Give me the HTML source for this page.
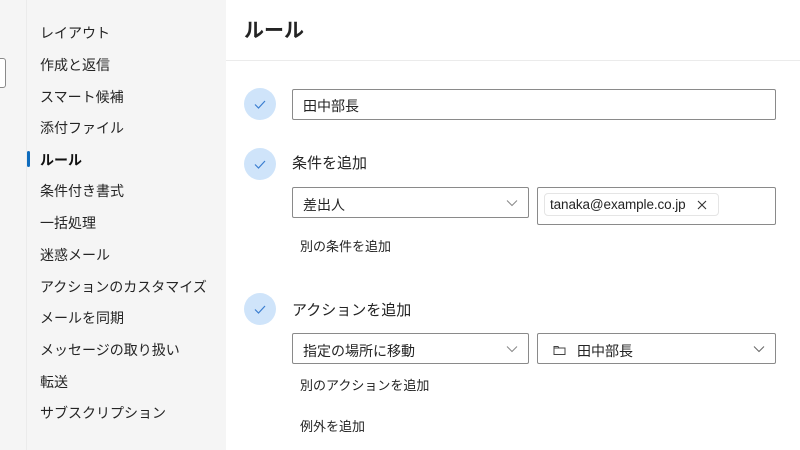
<!DOCTYPE html>
<html><head><meta charset="utf-8"><style>
*{margin:0;padding:0;box-sizing:border-box}
body{width:800px;height:450px;overflow:hidden;background:#fff;font-family:"Liberation Sans","Noto Sans CJK JP",sans-serif;color:#242424;position:relative}
.abs{position:absolute}
.side{left:0;top:0;width:226px;height:450px;background:#f5f5f5}
.strip{left:0;top:0;width:27px;height:450px;background:#f5f5f5;border-right:1px solid #ebebeb}
.stub{left:-4px;top:58px;width:10px;height:30px;border:1px solid #8a8a8a;border-radius:3px;background:#fff}
.nav{left:40px;font-size:14px;line-height:20px;color:#242424}
.circ{width:32px;height:32px;border-radius:50%;background:#cfe4fa}
.circ svg{position:absolute;left:9px;top:10px}
.box{border:1px solid #8a8a8a;border-radius:2px;background:#fff;font-size:14px}
.chev{position:absolute;right:10px;top:11px}
.t{font-size:14px;color:#242424;line-height:20px}
</style></head><body>
<div class="abs side"></div>
<div class="abs strip"></div>
<div class="abs stub"></div>
<div class="abs nav" style="top:23px">レイアウト</div>
<div class="abs nav" style="top:55px">作成と返信</div>
<div class="abs nav" style="top:87px">スマート候補</div>
<div class="abs nav" style="top:118px">添付ファイル</div>
<div class="abs" style="left:27px;top:151px;width:3px;height:16px;background:#0f6cbd;border-radius:2px"></div>
<div class="abs nav" style="top:150px;font-weight:bold;color:#111">ルール</div>
<div class="abs nav" style="top:181px">条件付き書式</div>
<div class="abs nav" style="top:213px">一括処理</div>
<div class="abs nav" style="top:245px">迷惑メール</div>
<div class="abs nav" style="top:277px">アクションのカスタマイズ</div>
<div class="abs nav" style="top:308px">メールを同期</div>
<div class="abs nav" style="top:340px">メッセージの取り扱い</div>
<div class="abs nav" style="top:372px">転送</div>
<div class="abs nav" style="top:403px">サブスクリプション</div>

<div class="abs" style="left:244px;top:18px;font-size:20px;font-weight:bold;line-height:26px">ルール</div>
<div class="abs" style="left:226px;top:60px;width:574px;height:1px;background:#ebebeb"></div>

<div class="abs circ" style="left:244px;top:88px"><svg width="14" height="12" viewBox="0 0 14 12"><path d="M2 6.5l3.5 3.5L12 3" fill="none" stroke="#3b7ed0" stroke-width="1.2"/></svg></div>
<div class="abs box" style="left:292px;top:89px;width:484px;height:31px;padding:6px 10px">田中部長</div>

<div class="abs circ" style="left:244px;top:148px"><svg width="14" height="12" viewBox="0 0 14 12"><path d="M2 6.5l3.5 3.5L12 3" fill="none" stroke="#3b7ed0" stroke-width="1.2"/></svg></div>
<div class="abs t" style="left:292px;top:154px;font-size:15px">条件を追加</div>
<div class="abs box" style="left:292px;top:187px;width:237px;height:31px;padding:7px 10px 5px">差出人<svg class="chev" width="12" height="8" viewBox="0 0 12 8"><path d="M1 1.5l5 5 5-5" fill="none" stroke="#888" stroke-width="1"/></svg></div>
<div class="abs box" style="left:537px;top:187px;width:239px;height:38px"></div>
<div class="abs" style="left:544px;top:193px;width:175px;height:23px;border:1px solid #e5e5e5;border-radius:4px;background:#fff;font-size:13.5px;padding:2px 5px;line-height:18px;letter-spacing:-0.1px">tanaka@example.co.jp<svg style="position:absolute;right:11px;top:6px" width="10" height="10" viewBox="0 0 10 10"><path d="M1 1l8 8M9 1l-8 8" stroke="#333" stroke-width="1.1"/></svg></div>
<div class="abs t" style="left:300px;top:237px;font-size:13px">別の条件を追加</div>

<div class="abs circ" style="left:244px;top:293px"><svg width="14" height="12" viewBox="0 0 14 12"><path d="M2 6.5l3.5 3.5L12 3" fill="none" stroke="#3b7ed0" stroke-width="1.2"/></svg></div>
<div class="abs t" style="left:292px;top:301px;font-size:15px">アクションを追加</div>
<div class="abs box" style="left:292px;top:333px;width:237px;height:31px;padding:7px 10px 5px">指定の場所に移動<svg class="chev" width="12" height="8" viewBox="0 0 12 8"><path d="M1 1.5l5 5 5-5" fill="none" stroke="#888" stroke-width="1"/></svg></div>
<div class="abs box" style="left:537px;top:333px;width:239px;height:31px;padding:7px 10px 5px 39px">田中部長<svg style="position:absolute;left:15px;top:10px" width="13" height="12" viewBox="0 0 13 12"><path d="M1 2.5V10.5H12V4H6L5 2.5H1Z M1 4H6" fill="none" stroke="#444" stroke-width="1"/></svg><svg class="chev" width="12" height="8" viewBox="0 0 12 8"><path d="M1 1.5l5 5 5-5" fill="none" stroke="#666" stroke-width="1"/></svg></div>
<div class="abs t" style="left:300px;top:376px;font-size:13px">別のアクションを追加</div>
<div class="abs t" style="left:300px;top:417px;font-size:13px">例外を追加</div>
</body></html>
